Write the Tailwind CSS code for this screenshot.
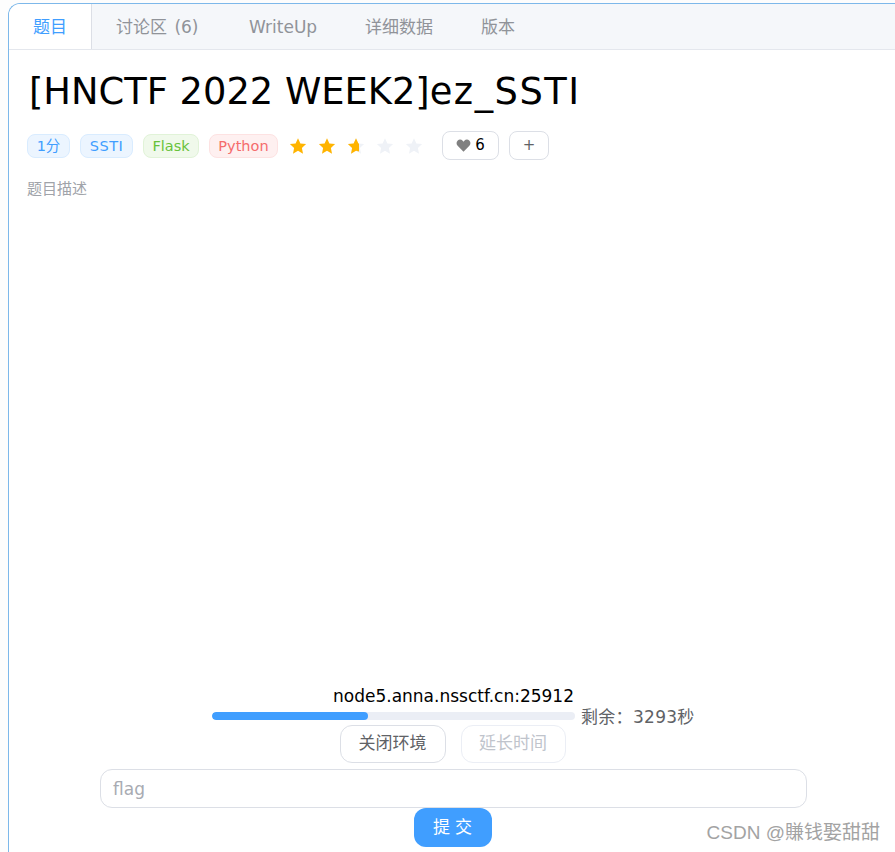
<!DOCTYPE html>
<html lang="zh-CN">
	<head>
		<meta charset="UTF-8" />
		<script src="https://cdn.jsdelivr.net/npm/@tailwindcss/browser@4"></script>
		<title>ez_SSTI</title>
	</head>
	<body class="bg-white font-['DejaVu_Sans','Noto_Sans_CJK_SC',sans-serif] overflow-hidden">
		<div class="relative h-[852px] w-[895px] bg-[#fdfdfd] pl-2 pt-[3px]">
			<!-- card -->
			<div class="flex h-[849px] flex-col rounded-tl-xl border-t border-l border-[#7db8ea] bg-white">
				<!-- tabs -->
				<div class="flex h-[46px] items-center overflow-hidden rounded-tl-xl border-b border-[#e4e7ed] bg-[#f5f7fa] text-[17px] text-[#909399]">
					<div class="flex h-[46px] w-[83px] items-center justify-center border-r border-[#dcdfe6] bg-white pt-[2px] text-[#409eff]">题目</div>
					<div class="ml-6 w-[84px] pt-[2px] whitespace-nowrap [word-spacing:2px]">讨论区 (6)</div>
					<div class="ml-[49px] w-[68px] pt-[2px]">WriteUp</div>
					<div class="ml-[48px] w-[68px] pt-[2px]">详细数据</div>
					<div class="ml-12 pt-[2px]">版本</div>
				</div>

				<!-- title -->
				<h1 class="mt-[18px] ml-[20px] text-[36.8px] leading-[48px] font-normal whitespace-nowrap text-black">[HNCTF 2022 WEEK2]<span class="tracking-[1.5px]">ez_SSTI</span></h1>

				<!-- tags -->
				<div class="mt-[14px] ml-[18px] flex h-[30px] items-center text-[14.5px]">
					<span class="mt-[2px] flex h-6 w-[43px] items-center justify-center rounded-lg border border-[#d9ecff] bg-[#ecf5ff] pt-[2px] text-[#409eff]">1分</span>
					<span class="mt-[2px] ml-2.5 flex h-6 w-[53px] items-center justify-center rounded-lg border border-[#d9ecff] bg-[#ecf5ff] pt-[2px] tracking-[0.5px] text-[#409eff]">SSTI</span>
					<span class="mt-[2px] ml-2.5 flex h-6 w-[56px] items-center justify-center rounded-lg border border-[#e1f3d8] bg-[#f0f9eb] pt-[2px] text-[#67c23a]">Flask</span>
					<span class="mt-[2px] ml-2.5 flex h-6 w-[69px] items-center justify-center rounded-lg border border-[#fde2e2] bg-[#fef0f0] pt-[2px] text-[#f56c6c]">Python</span>
					<div class="mt-[2px] ml-[11px] flex gap-[11px]">
						<svg class="h-[18px] w-[18px] text-[#ffb400]" viewBox="0 0 24 24" fill="currentColor"><path d="M12 1.500l3.200 7 7.600.9-5.600 5.200 1.500 7.600L12 18.400 5.300 22.200l1.500-7.600L1.200 9.400l7.600-.9z"/></svg>
						<svg class="h-[18px] w-[18px] text-[#ffb400]" viewBox="0 0 24 24" fill="currentColor"><path d="M12 1.500l3.200 7 7.600.9-5.600 5.200 1.500 7.600L12 18.400 5.300 22.200l1.500-7.600L1.200 9.400l7.600-.9z"/></svg>
						<svg class="h-[18px] w-[18px]" viewBox="0 0 24 24"><path fill="#eff2f7" d="M12 1.500l3.200 7 7.600.9-5.600 5.200 1.500 7.600L12 18.400 5.300 22.200l1.500-7.600L1.200 9.400l7.600-.9z"/><path fill="#ffb400" d="M12 1.500l3.200 7 .8.1V19.200l-4-.8-6.700 3.800 1.500-7.600L1.200 9.400l7.600-.9z"/></svg>
						<svg class="h-[18px] w-[18px] text-[#eff2f7]" viewBox="0 0 24 24" fill="currentColor"><path d="M12 1.500l3.200 7 7.600.9-5.600 5.200 1.500 7.600L12 18.400 5.300 22.200l1.500-7.600L1.200 9.400l7.600-.9z"/></svg>
						<svg class="h-[18px] w-[18px] text-[#eff2f7]" viewBox="0 0 24 24" fill="currentColor"><path d="M12 1.500l3.200 7 7.600.9-5.600 5.200 1.500 7.600L12 18.400 5.300 22.200l1.500-7.600L1.200 9.400l7.600-.9z"/></svg>
					</div>
					<button class="ml-[19px] flex h-[29px] w-[57px] items-center justify-center gap-1 rounded-lg border border-[#dcdfe6] text-[15px] text-black">
						<svg class="h-[15px] w-[15px] text-[#808080]" viewBox="0 0 24 24" fill="currentColor"><path d="M12 22 2.600 12.400C.2 9.800.4 6 2.800 3.900 5.200 1.900 8.700 2.300 10.700 4.400L12 5.800l1.300-1.400c2-2.100 5.500-2.500 7.900-.5 2.400 2.100 2.600 5.900.2 8.500z"/></svg>
						<span>6</span>
					</button>
					<button class="ml-2.5 flex h-[29px] w-10 items-center justify-center rounded-lg border border-[#dcdfe6] text-[15px] text-[#606266]">+</button>
				</div>

				<p class="mt-[19px] ml-[18px] text-[15px] leading-5 text-[#a0a3a9]">题目描述</p>

				<!-- env panel -->
				<div class="mt-auto flex flex-col items-center pl-[3px]">
					<div class="h-5 pt-px text-[17px] leading-5 text-black">node5.anna.nssctf.cn:25912</div>
					<div class="mt-px flex h-5 items-center">
						<div class="h-2 w-[363px] overflow-hidden rounded-full bg-[#ebeef5]">
							<div class="h-2 w-[156px] rounded-full bg-[#409eff]"></div>
						</div>
						<span class="ml-[6px] w-[114px] pt-[3px] text-[17px] tracking-[0.3px] whitespace-nowrap text-[#606266]">剩余：3293秒</span>
					</div>
					<div class="-mt-px mr-[2px] flex gap-[15px]">
						<button class="h-[38px] w-[106px] rounded-xl border border-[#dcdfe6] bg-white text-[17px] text-[#606266]">关闭环境</button>
						<button class="h-[38px] w-[105px] rounded-xl border border-[#ebeef5] bg-white text-[17px] text-[#c0c4cc]">延长时间</button>
					</div>
					<div class="mt-1.5 flex h-[39px] w-[707px] items-center rounded-xl border border-[#dcdfe6] bg-white px-3 pt-[2px] text-[17px] text-[#a8abb2]">flag</div>
					<button class="mr-[2px] h-[39px] w-[78px] rounded-xl bg-[#409eff] pl-[5px] text-[17px] tracking-[5px] text-white">提交</button>
				</div>
				<div class="h-[5px]"></div>
			</div>

			<!-- csdn watermark -->
			<div class="absolute right-[15px] bottom-[7px] font-['Liberation_Sans','Noto_Sans_CJK_SC',sans-serif] text-[19px] leading-6 text-[#a3a3a3]">CSDN @賺钱娶甜甜</div>
		</div>
	</body>
</html>
